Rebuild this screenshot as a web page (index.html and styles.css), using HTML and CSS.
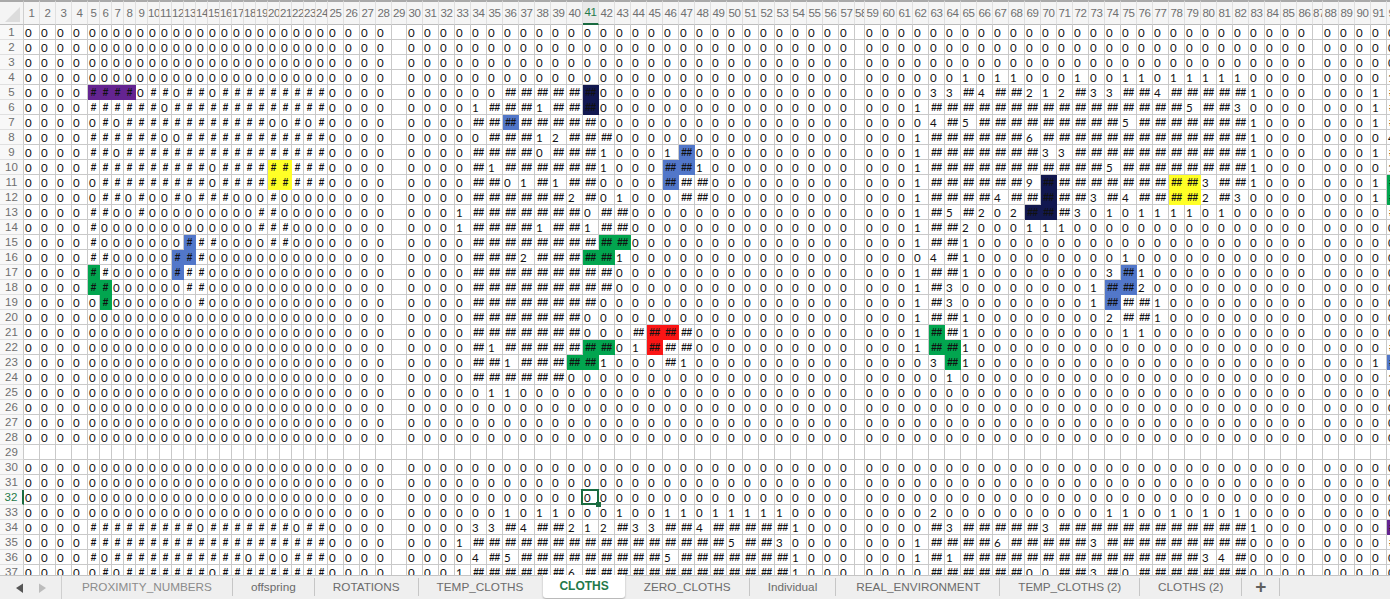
FILE: index.html
```html
<!DOCTYPE html>
<html>
<head>
  <title>CLOTHS</title>
  <link rel="stylesheet" href="styles.css">
</head>
<body>
  <div class="app">
    <div class="sheet" id="sheet"></div>
    <div class="tabbar">
      <div class="tab-nav">
        <svg width="60" height="24" viewBox="0 0 60 24">
          <path d="M16 13 L23 8.5 L23 18 Z" fill="#565656"></path>
          <path d="M39 8.5 L46 13 L39 18 Z" fill="#bcbcbc"></path>
        </svg>
      </div>
      <div class="tab tab-first">PROXIMITY_NUMBERS</div>
      <div class="tab">offspring</div>
      <div class="tab">ROTATIONS</div>
      <div class="tab tab-before">TEMP_CLOTHS</div>
      <div class="tab tab-active">CLOTHS</div>
      <div class="tab">ZERO_CLOTHS</div>
      <div class="tab">Individual</div>
      <div class="tab tab-real">REAL_ENVIRONMENT</div>
      <div class="tab tab-narrow">TEMP_CLOTHS (2)</div>
      <div class="tab">CLOTHS (2)</div>
      <div class="tab tab-add">+</div>
    </div>
  </div>
  <script src="script.js"></script>
</body>
</html>
```

FILE: styles.css
```css
html, body {
  margin: 0;
  height: 100%;
  overflow: hidden;
  background-color: #fff;
}
.app {
  display: flex;
  flex-direction: column;
  height: 599px;
  width: 1390px;
  overflow: hidden;
}
.sheet {
  flex: 1;
  min-height: 0;
  overflow: hidden;
  display: grid;
  grid-template-columns: 24px repeat(4, 16px) repeat(20, 12px) repeat(4, 16px) 15px repeat(28, 16px) 10px repeat(28, 16px) 10px repeat(5, 16px);
  grid-template-rows: 25px repeat(37, 15px);
  font-family: Lato, 'Liberation Sans', sans-serif;
  font-size: 11.5px;
  color: #111;
}
.cell {
  box-sizing: border-box;
  border-right: 1px solid #c9c9c9;
  border-bottom: 1px solid #c9c9c9;
  line-height: 15px;
  padding-left: 1px;
  overflow: hidden;
  white-space: nowrap;
}
.hash {
  padding-left: 0;
  text-align: center;
  font-family: 'Liberation Sans', sans-serif;
  font-size: 10px;
  font-weight: 700;
  letter-spacing: -0.3px;
}
.corner, .col-head, .row-head {
  box-sizing: border-box;
  font-family: 'Liberation Sans', sans-serif;
  font-size: 11.5px;
  color: #6f6f6f;
  overflow: hidden;
  white-space: nowrap;
  text-align: center;
}
.corner {
  display: flex;
  justify-content: flex-end;
  align-items: flex-end;
  padding: 0 3px 2px 0;
  background-color: #f4f4f4;
  border-top: 2px solid #a9a9a9;
  border-right: 1px solid #cfcfcf;
  border-bottom: 1px solid #bdbdbd;
}
.corner-mark {
  width: 0;
  height: 0;
  border-left: 15px solid transparent;
  border-bottom: 15px solid #dcdcdc;
}
.col-head {
  background-color: #f5f5f5;
  border-top: 2px solid #a9a9a9;
  border-right: 1px solid #e0e0e0;
  border-bottom: 1px solid #bdbdbd;
  line-height: 22px;
  letter-spacing: -0.3px;
}
.row-head {
  background-color: #f8f8f8;
  border-right: 1px solid #c9c9c9;
  border-bottom: 1px solid #e0e0e0;
  line-height: 15px;
}
.col-head.current {
  background-color: #e9e9e9;
  color: #1f7a4a;
  border-bottom: 2px solid #1a6b40;
  line-height: 21px;
}
.row-head.current {
  color: #1f7a4a;
  border-right: 2px solid #1a6b40;
}
.purple { background-color: #642491; border-color: #642491; }
.yellow { background-color: #ffff26; border-color: #ffff26; }
.blue { background-color: #5277c9; border-color: #5277c9; }
.green { background-color: #02a54f; border-color: #02a54f; }
.navy { background-color: #121850; border-color: #121850; }
.red { background-color: #fb1515; border-color: #fb1515; }
.selected {
  position: relative;
  overflow: visible;
}
.selected::before {
  content: '';
  position: absolute;
  left: -2px;
  top: -1px;
  right: -1px;
  bottom: -1px;
  border: 2px solid #1a6b40;
}
.selected::after {
  content: '';
  position: absolute;
  right: -3px;
  bottom: -3px;
  width: 5px;
  height: 5px;
  background-color: #1a6b40;
}
.tabbar {
  flex: none;
  height: 24px;
  display: flex;
  align-items: flex-start;
  background-color: #efefef;
  border-top: 1px solid #c4c4c4;
  box-sizing: border-box;
  font-family: 'Liberation Sans', sans-serif;
  font-size: 11.75px;
  color: #6b6b6b;
}
.tab-nav {
  width: 62px;
  height: 23px;
  box-sizing: border-box;
  border-right: 1px solid #cfcfcf;
  flex: none;
}
.tab-nav svg {
  display: block;
  margin-top: -1px;
}
.tab {
  flex: none;
  margin-top: 2px;
  height: 18px;
  line-height: 18px;
  padding: 0 18px;
  border-right: 1px solid #c6c6c6;
  white-space: nowrap;
}
.tab-first {
  padding-left: 20px;
  padding-right: 20px;
  color: #8b8b8b;
}
.tab-before {
  border-right: none;
}
.tab-real {
  padding: 0 19px 0 20px;
}
.tab-narrow {
  letter-spacing: -0.12px;
}
.tab-active {
  margin-top: -1px;
  margin-left: 2px;
  margin-right: 1px;
  height: 23px;
  line-height: 23px;
  padding: 0 16px;
  background-color: #fff;
  border-right: none;
  border-radius: 0 0 3px 3px;
  box-shadow: 0 1px 2px rgba(0, 0, 0, 0.3);
  color: #1f7a4a;
  font-size: 12px;
  font-weight: 700;
}
.tab-add {
  padding: 0 13px;
  font-size: 19px;
  font-weight: 700;
  color: #5f5f5f;
}
```

FILE: script.js
```js
const Z = '0'.repeat(28);

// each row: cols 1-28, cols 30-57, cols 59-86, cols 88-92
const data = {
  4: [Z, Z, '0000001011000100110111110000', '00001'],
  5: ['0000####0##0##0#########0000', '000000######0000000000000000', '000033#4##212#33##4#####1000', '0001#'],
  6: ['0000######0#############0000', '00001###1###0000000000000000', '0001################5##30000', '0001#'],
  7: ['00000#0############00#0#0000', '0000########0000000000000000', '00004#5#########5#######1000', '0001#'],
  8: ['0000######00############0000', '00000###12###000000000000000', '0001######6#############1000', '00004'],
  9: ['0000##0#################0000', '0000####0###10001#0000000000', '0001#######33###########1000', '0001#'],
  10: ['0000##########0#########0000', '0000#1######1000##1000000000', '0001###########5########1000', '00001'],
  11: ['00000#########0#########0000', '0000##01#1##0000###000000000', '0001######9##########3##1000', '0001#'],
  12: ['00000##0#00#0###000#00000000', '0000######2#01000##000000000', '0001####4#####3#4####2#30000', '0001#'],
  13: ['0000##00#000000000##00000000', '0001#######0##00000000000000', '0001#5#202###301011110100000', '0000#'],
  14: ['0000#0000000000000###0000000', '0001####1##1##00000000000000', '0001##2000111000000000000000', '00000'],
  15: ['0000#0000000###0000##0000000', '0000##########00000000000000', '0001##1000000000000000000000', '00000'],
  16: ['0000##00000###00000000000000', '0000###2#####100000000000000', '00004#1000000000100000000000', '00000'],
  17: ['0000##00000###00000000000000', '0000#########000000000000000', '0001##1000000003#10000000000', '00000'],
  18: ['0000##000000##00000000000000', '0000#########000000000000000', '0001#3000000001##20000000000', '00000'],
  19: ['00000#0000000#00000000000000', '0000########0000000000000000', '0001#3000000001###1000000000', '00000'],
  20: [Z, '0000#######00000000000000000', '0001##1000000002##1000000000', '00000'],
  21: [Z, '0000#######000####0000000000', '0001##1000000000110000000000', '00000'],
  22: [Z, '0000#1#######01###0000000000', '0001##1000000000000000000000', '0000#'],
  23: [Z, '0000##1#####1000#10000000000', '00003#1000000000000000000000', '0001#'],
  24: [Z, '0000######000000000000000000', '0000010000000000000000000000', '00001'],
  25: [Z, '0000011000000000000000000000', Z, '00000'],
  33: [Z, '0000001011000100110111110000', '0000200000000001100101010000', '00000'],
  34: ['0000#########0#######0##0000', '000033#4##212#33##4#####1000', '0000#3#####3############1000', '0000#'],
  35: ['0000####################0000', '0001################5##30000', '0001####6#####3#########0000', '0000#'],
  36: ['0000#0###########0#00###0000', '00004#5#########5#######1000', '0001#1###############34#0000', '00000'],
  37: ['00000#0#######0#########0000', '0001######6#############1000', '0000######00##3#0#######0000', '00000']
};

const fills = {
  purple: [[5, 5], [5, 6], [5, 7], [5, 8], [34, 92]],
  yellow: [[10, 20], [10, 21], [11, 20], [11, 21], [11, 78], [11, 79], [12, 78], [12, 79]],
  blue: [[15, 13], [16, 12], [16, 13], [17, 12], [7, 36], [9, 47], [10, 46], [10, 47], [11, 46],
    [17, 75], [18, 74], [18, 75], [19, 74], [23, 92]],
  green: [[17, 5], [18, 5], [18, 6], [19, 6], [15, 42], [15, 43], [16, 41], [16, 42], [22, 41], [22, 42],
    [23, 40], [23, 41], [21, 63], [22, 63], [22, 64], [23, 64], [11, 92], [12, 92]],
  navy: [[5, 41], [6, 41], [11, 70], [12, 70], [13, 69], [13, 70]],
  red: [[21, 45], [21, 46], [22, 45]]
};

const fillAt = {};
for (const name in fills) {
  for (const [r, c] of fills[name]) {
    fillAt[r + ':' + c] = name;
  }
}

const COLS = 92;
const ROWS = 37;
const CUR_COL = 41;
const CUR_ROW = 32;
const sheet = document.getElementById('sheet');

function add(className, text) {
  const el = document.createElement('div');
  el.className = className;
  if (text) el.textContent = text;
  sheet.appendChild(el);
  return el;
}

function valueAt(r, c) {
  if (r === 29 || c === 29 || c === 58 || c === 87) return '';
  const row = data[r] || [Z, Z, Z, '00000'];
  if (c < 29) return row[0][c - 1];
  if (c < 58) return row[1][c - 30];
  if (c < 87) return row[2][c - 59];
  return row[3][c - 88];
}

const corner = add('corner');
corner.appendChild(document.createElement('div')).className = 'corner-mark';

for (let c = 1; c <= COLS; c++) {
  add('col-head' + (c === CUR_COL ? ' current' : ''), String(c));
}

for (let r = 1; r <= ROWS; r++) {
  add('row-head' + (r === CUR_ROW ? ' current' : ''), String(r));
  for (let c = 1; c <= COLS; c++) {
    const v = valueAt(r, c);
    let cls = 'cell';
    let text = v;
    if (v === '#') {
      cls += ' hash';
      text = c >= 5 && c <= 24 ? '#' : '##';
    }
    if (fillAt[r + ':' + c]) cls += ' ' + fillAt[r + ':' + c];
    if (r === CUR_ROW && c === CUR_COL) cls += ' selected';
    add(cls, text);
  }
}
```
